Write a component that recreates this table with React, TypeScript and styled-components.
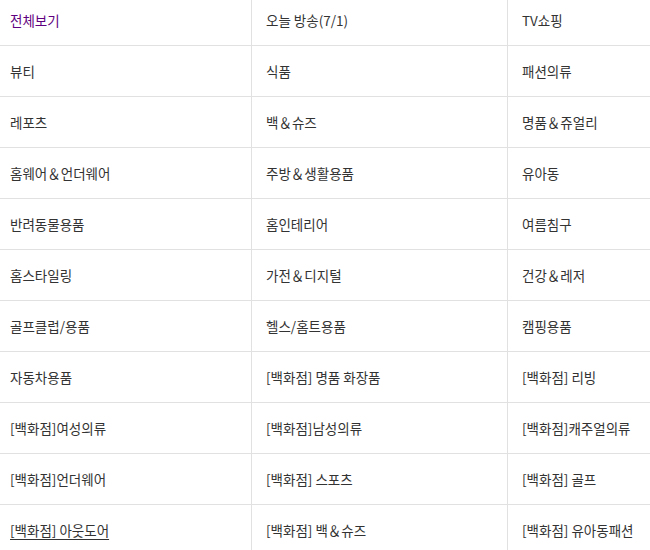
import React from "react";
import styled, { createGlobalStyle } from "styled-components";

const GlobalStyle = createGlobalStyle`
  html, body {
    margin: 0;
    padding: 0;
    background: #fff;
    overflow: hidden;
  }
  body {
    font-family: "Noto Sans CJK KR", "Noto Sans", sans-serif;
  }
`;

const Frame = styled.div`
  width: 650px;
  height: 550px;
  overflow: hidden;
`;

const Table = styled.ul`
  list-style: none;
  margin: -5px 0 0 -4px;
  padding: 0;
  display: grid;
  grid-template-columns: repeat(3, 256px);
  width: 768px;
`;

const Cell = styled.li<{ $last: boolean }>`
  height: 50px;
  display: flex;
  align-items: center;
  padding: 0 14px;
  border-bottom: 1px solid #e1e1e1;
  border-right: ${(p) => (p.$last ? "none" : "1px solid #e1e1e1")};
  box-sizing: content-box;
  width: ${(p) => (p.$last ? "228px" : "227px")};
`;

const Link = styled.a<{ $active?: boolean; $hover?: boolean }>`
  font-size: 13.5px;
  line-height: 18px;
  letter-spacing: 0;
  color: ${(p) => (p.$active ? "#5f0080" : "#333")};
  text-decoration: ${(p) => (p.$hover ? "underline" : "none")};
  text-underline-offset: 3px;
  cursor: pointer;
  white-space: nowrap;
`;

const items: { label: string; active?: boolean; hover?: boolean }[] = [
  { label: "전체보기", active: true },
  { label: "오늘 방송(7/1)" },
  { label: "TV쇼핑" },
  { label: "뷰티" },
  { label: "식품" },
  { label: "패션의류" },
  { label: "레포츠" },
  { label: "백＆슈즈" },
  { label: "명품＆쥬얼리" },
  { label: "홈웨어＆언더웨어" },
  { label: "주방＆생활용품" },
  { label: "유아동" },
  { label: "반려동물용품" },
  { label: "홈인테리어" },
  { label: "여름침구" },
  { label: "홈스타일링" },
  { label: "가전＆디지털" },
  { label: "건강＆레저" },
  { label: "골프클럽/용품" },
  { label: "헬스/홈트용품" },
  { label: "캠핑용품" },
  { label: "자동차용품" },
  { label: "[백화점] 명품 화장품" },
  { label: "[백화점] 리빙" },
  { label: "[백화점]여성의류" },
  { label: "[백화점]남성의류" },
  { label: "[백화점]캐주얼의류" },
  { label: "[백화점]언더웨어" },
  { label: "[백화점] 스포츠" },
  { label: "[백화점] 골프" },
  { label: "[백화점] 아웃도어", hover: true },
  { label: "[백화점] 백＆슈즈" },
  { label: "[백화점] 유아동패션" },
];

export default function App() {
  return (
    <>
      <GlobalStyle />
      <Frame>
        <Table>
          {items.map((it, i) => (
            <Cell key={i} $last={i % 3 === 2}>
              <Link $active={it.active} $hover={it.hover}>
                {it.label}
              </Link>
            </Cell>
          ))}
        </Table>
      </Frame>
    </>
  );
}
